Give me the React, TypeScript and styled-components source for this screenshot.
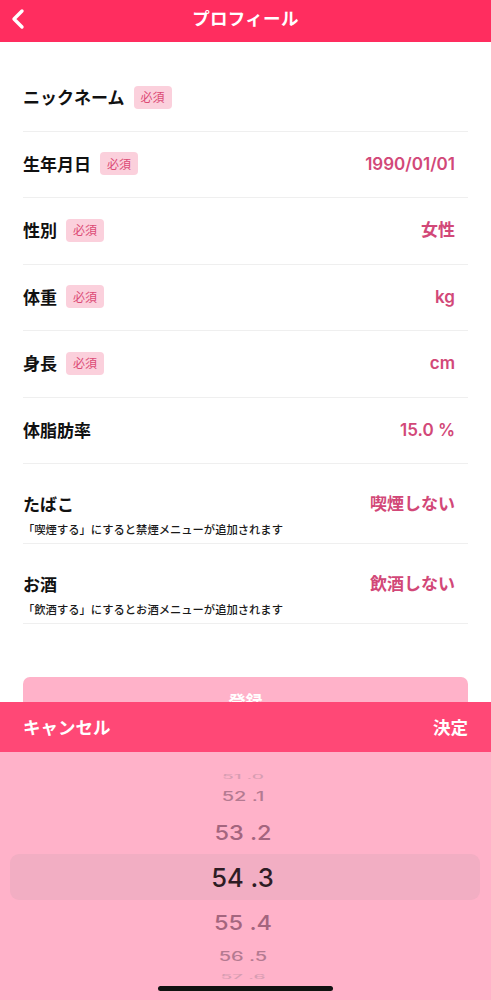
import React from "react";
import styled, { createGlobalStyle } from "styled-components";

const GlobalStyle = createGlobalStyle`
  html, body {
    margin: 0;
    padding: 0;
    background: #ffffff;
  }
  body {
    width: 491px;
    height: 1000px;
    overflow: hidden;
    font-family: "Noto Sans CJK JP", "Noto Sans", sans-serif;
  }
`;

type Field = {
  label: string;
  required?: boolean;
  value?: string;
  note?: string;
};

const fields: Field[] = [
  { label: "ニックネーム", required: true },
  { label: "生年月日", required: true, value: "1990/01/01" },
  { label: "性別", required: true, value: "女性" },
  { label: "体重", required: true, value: "kg" },
  { label: "身長", required: true, value: "cm" },
  { label: "体脂肪率", value: "15.0 %" },
  {
    label: "たばこ",
    value: "喫煙しない",
    note: "「喫煙する」にすると禁煙メニューが追加されます",
  },
  {
    label: "お酒",
    value: "飲酒しない",
    note: "「飲酒する」にするとお酒メニューが追加されます",
  },
];

// wheel items, distance from the selected one decides the look
const wheel = [
  { text: "51 .0", h: 14, size: 19, sy: 0.3, color: "#d79db2" },
  { text: "52 .1", h: 26, size: 20, sy: 0.62, color: "#b47a91" },
  { text: "53 .2", h: 44, size: 23.5, sy: 0.86, color: "#a4657e" },
  { text: "54 .3", h: 46, size: 25.5, sy: 1, color: "#2e1c24", selected: true },
  { text: "55 .4", h: 44, size: 23.5, sy: 0.86, color: "#a4657e" },
  { text: "56 .5", h: 26, size: 20, sy: 0.62, color: "#b47a91" },
  { text: "57 .6", h: 14, size: 19, sy: 0.3, color: "#d79db2" },
];

export default function App() {
  return (
    <>
      <GlobalStyle />
      <Page>
        <Header>
          <BackButton type="button" aria-label="戻る">
            <svg width="16" height="22" viewBox="0 0 16 22">
              <polyline
                points="12,3 4,11 12,19"
                fill="none"
                stroke="#ffffff"
                strokeWidth="3.4"
                strokeLinecap="round"
                strokeLinejoin="round"
              />
            </svg>
          </BackButton>
          <Title>プロフィール</Title>
        </Header>

        <Content>
          {fields.map((f) => (
            <Row key={f.label} $tall={!!f.note}>
              <RowMain>
                <Label>
                  {f.label}
                  {f.required && <Badge>必須</Badge>}
                </Label>
                {f.value && <Value>{f.value}</Value>}
              </RowMain>
              {f.note && <Note>{f.note}</Note>}
            </Row>
          ))}
          <SubmitButton type="button">登録</SubmitButton>
        </Content>
      </Page>

      <Sheet>
        <Toolbar>
          <ToolbarButton type="button">キャンセル</ToolbarButton>
          <ToolbarButton type="button">決定</ToolbarButton>
        </Toolbar>
        <Wheel>
          {wheel.map((w) => (
            <WheelItem key={w.text} $h={w.h} $selected={!!w.selected}>
              <WheelText $size={w.size} $sy={w.sy} $color={w.color}>
                {w.text}
              </WheelText>
            </WheelItem>
          ))}
        </Wheel>
        <HomeBar />
      </Sheet>
    </>
  );
}

// Styled Components
const Page = styled.div`
  width: 491px;
  min-height: 1000px;
  background: #ffffff;
`;

const Header = styled.header`
  height: 42px;
  background: #ff2d5f;
  display: grid;
  grid-template-columns: 48px 1fr 48px;
  align-items: center;
`;

const BackButton = styled.button`
  background: transparent;
  border: none;
  padding: 0 0 4px 10px;
  display: flex;
  align-items: center;
  cursor: pointer;
`;

const Title = styled.h1`
  margin: 0 0 8px;
  text-align: center;
  color: #ffffff;
  font-size: 17.5px;
  font-weight: 700;
  letter-spacing: 0.3px;
`;

const Content = styled.main`
  padding: 23px 23px 0;
  display: flex;
  flex-direction: column;
`;

const Row = styled.div<{ $tall: boolean }>`
  border-bottom: 1px solid #efefef;
  display: flex;
  flex-direction: column;
  justify-content: center;
  height: ${(p) => (p.$tall ? "80px" : "66.5px")};
  padding: ${(p) => (p.$tall ? "28px 0 6px" : "0")};
  box-sizing: border-box;
  gap: 5px;
`;

const RowMain = styled.div`
  display: flex;
  align-items: center;
  justify-content: space-between;
  padding-right: 13px;
  padding-bottom: 1px;
`;

const Label = styled.div`
  display: flex;
  align-items: center;
  color: #111111;
  font-size: 17px;
  font-weight: 700;
  line-height: 24px;
`;

const Badge = styled.span`
  margin-left: 9px;
  height: 23px;
  padding: 0 7px;
  display: inline-flex;
  align-items: center;
  border-radius: 4px;
  background: #fbd0dc;
  color: #dc4a75;
  font-size: 12px;
  font-weight: 400;
`;

const Value = styled.div`
  color: #d24878;
  font-family: "Inter", "Noto Sans CJK JP", sans-serif;
  font-size: 17px;
  font-weight: 600;
  line-height: 24px;
`;

const Note = styled.p`
  margin: 0;
  color: #1a1a1a;
  font-size: 11.3px;
  font-weight: 500;
  line-height: 15px;
`;

const SubmitButton = styled.button`
  margin-top: 53px;
  height: 46px;
  border: none;
  border-radius: 7px;
  background: #ffb2c9;
  color: #ffffff;
  font-family: "Noto Sans CJK JP", sans-serif;
  font-size: 17px;
  font-weight: 700;
`;

const Sheet = styled.div`
  position: fixed;
  left: 0;
  right: 0;
  bottom: 0;
  height: 298px;
  background: #ffb2c9;
  display: flex;
  flex-direction: column;
`;

const Toolbar = styled.div`
  height: 50px;
  background: #ff4876;
  display: flex;
  align-items: center;
  justify-content: space-between;
  padding: 0 23px 0 23px;
`;

const ToolbarButton = styled.button`
  background: transparent;
  border: none;
  padding: 0 0 2px;
  color: #ffffff;
  font-family: "Noto Sans CJK JP", sans-serif;
  font-size: 17.5px;
  font-weight: 700;
  cursor: pointer;
`;

const Wheel = styled.div`
  padding-top: 18px;
  display: flex;
  flex-direction: column;
`;

const WheelItem = styled.div<{ $h: number; $selected: boolean }>`
  height: ${(p) => p.$h}px;
  display: flex;
  align-items: center;
  justify-content: center;
  margin: ${(p) => (p.$selected ? "0 11px 0 10px" : "0")};
  border-radius: 9px;
  background: ${(p) => (p.$selected ? "#f2aec3" : "transparent")};
  overflow: hidden;
`;

const WheelText = styled.span<{ $size: number; $sy: number; $color: string }>`
  font-family: "Inter", "Liberation Sans", sans-serif;
  font-size: ${(p) => p.$size}px;
  font-weight: 500;
  color: ${(p) => p.$color};
  transform: scaleY(${(p) => p.$sy});
  white-space: pre;
  margin-left: -5px;
`;

const HomeBar = styled.div`
  margin: auto auto 9px;
  width: 175px;
  height: 5px;
  border-radius: 3px;
  background: #111111;
`;
